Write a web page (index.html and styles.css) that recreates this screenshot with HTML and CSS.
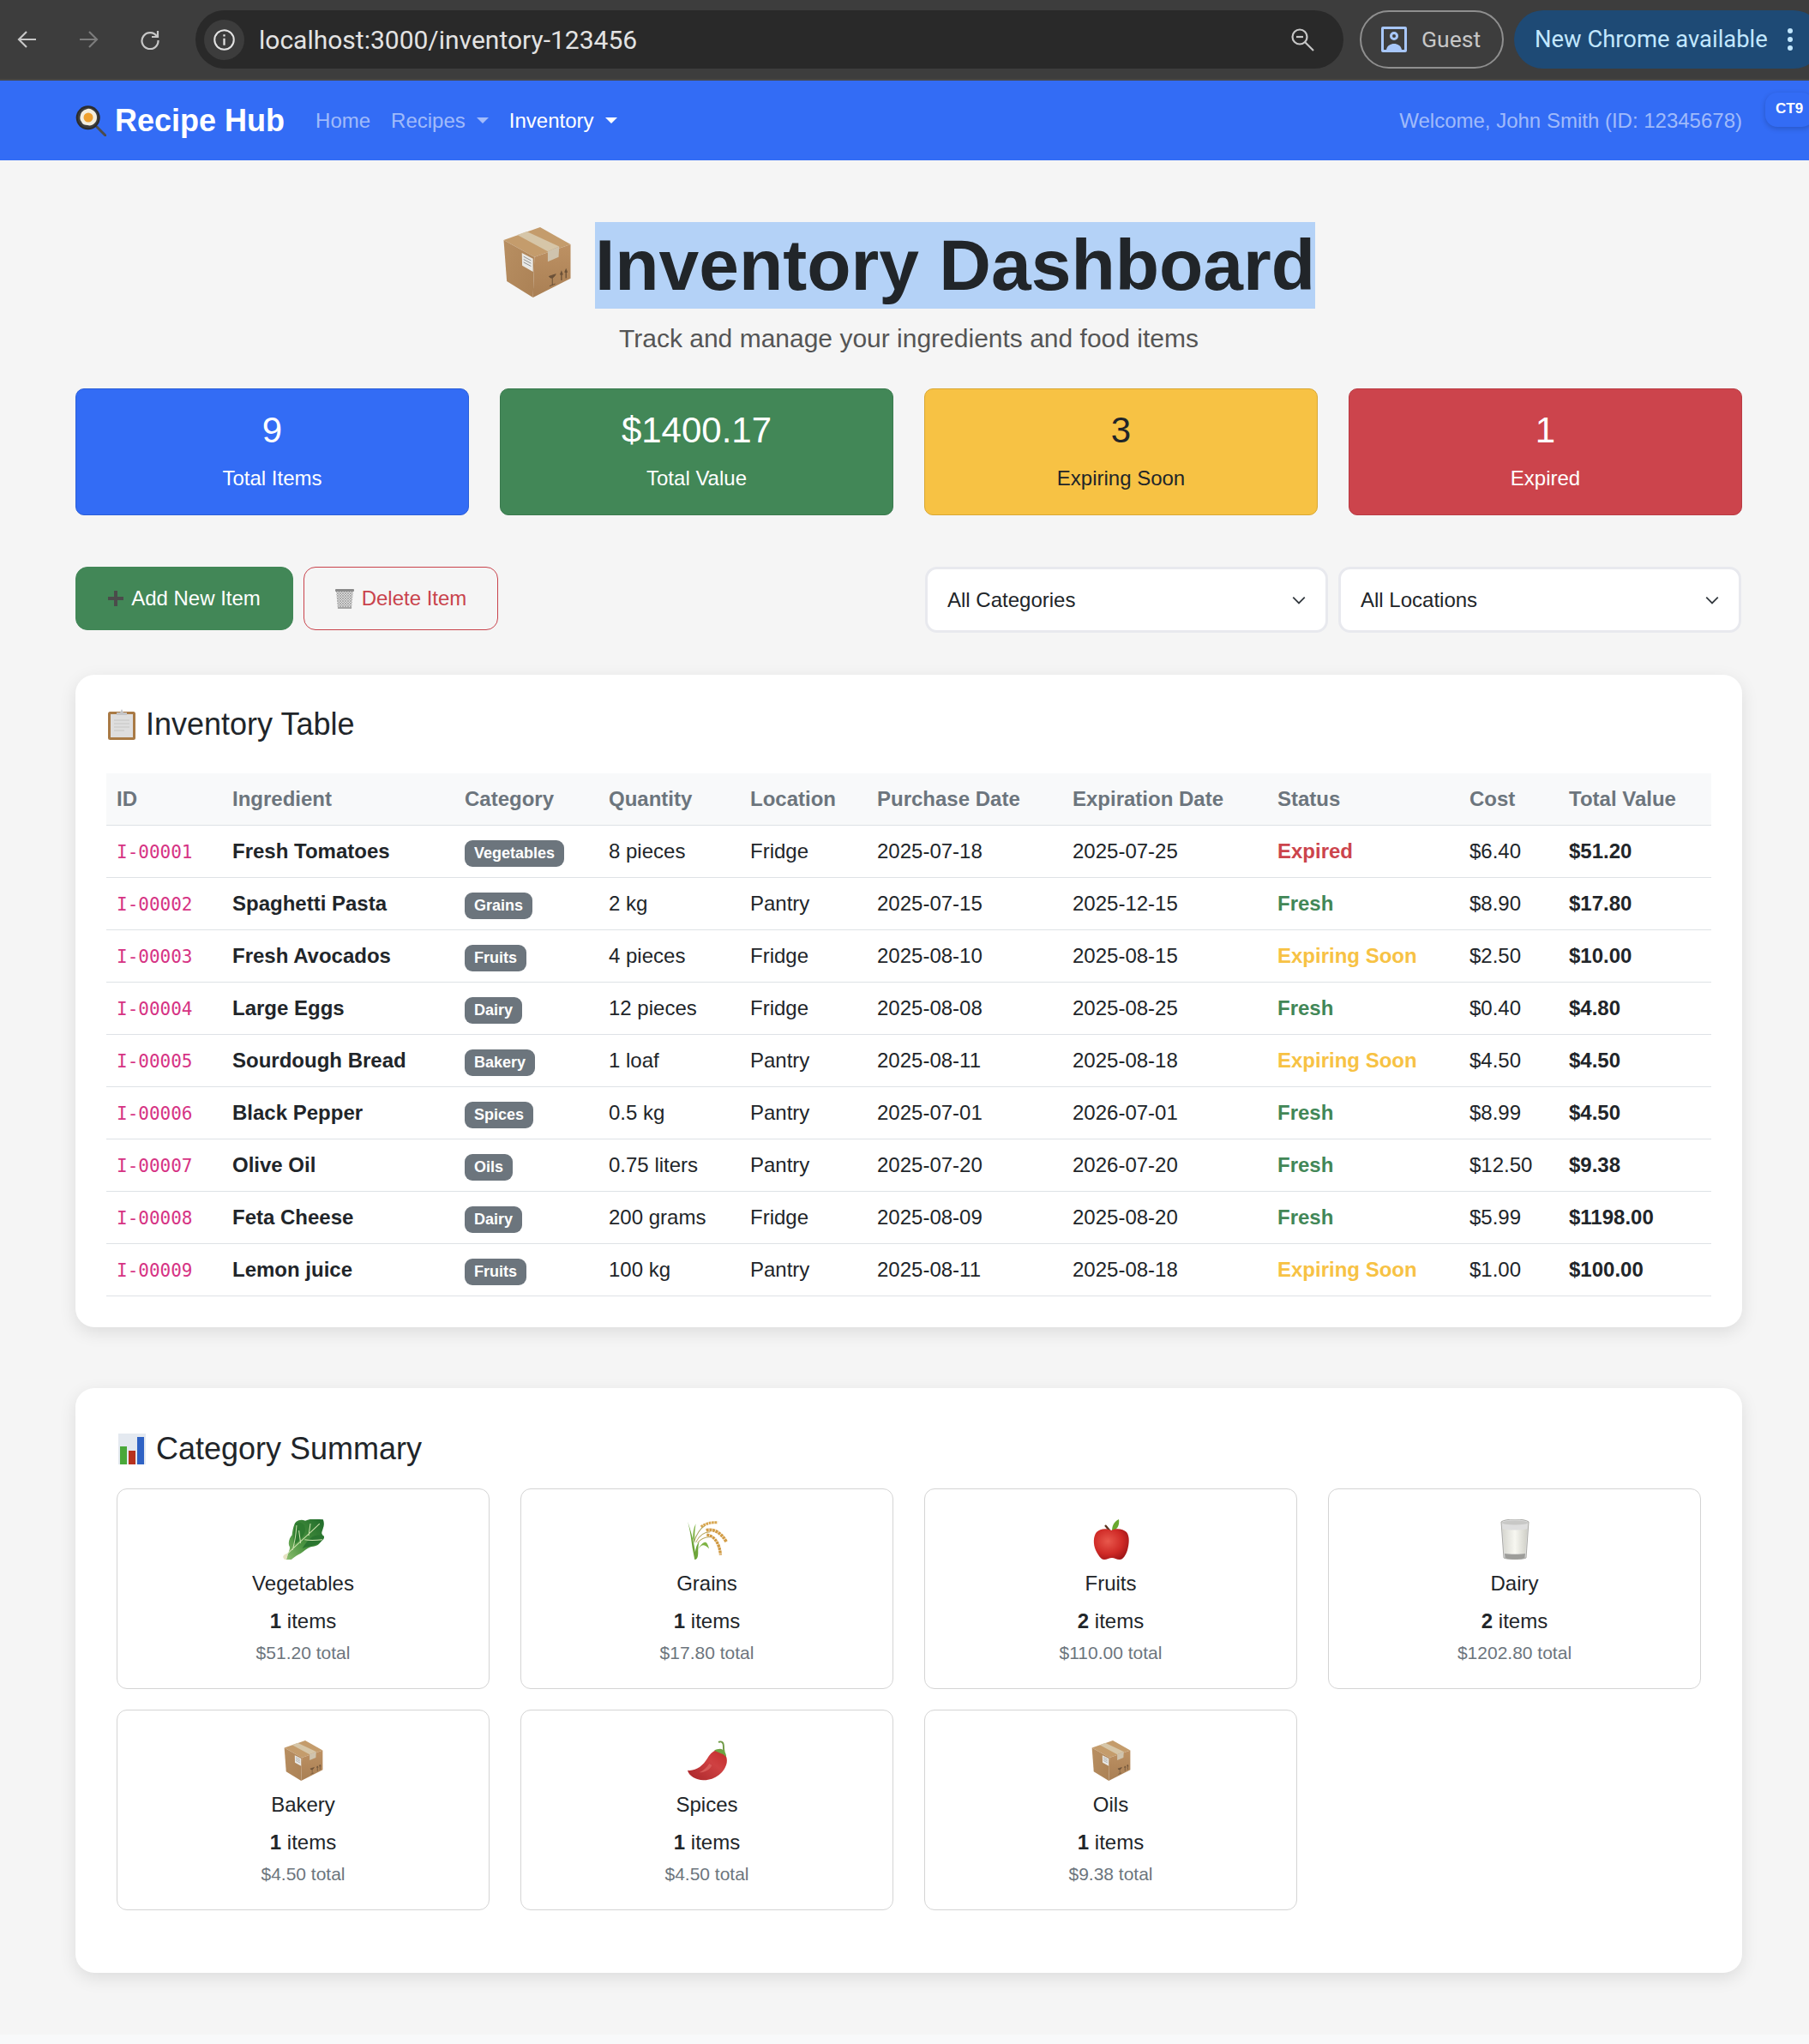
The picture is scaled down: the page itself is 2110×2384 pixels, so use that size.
FILE: index.html
```html
<!DOCTYPE html>
<html lang="en">
<head>
    <meta charset="UTF-8">
    <meta name="viewport" content="width=device-width, initial-scale=1.0">
    <title>Inventory Dashboard</title>
    <link rel="stylesheet" href="styles.css">
</head>

<body>
    <svg class="icon-defs" width="0" height="0" aria-hidden="true">
        <defs>
            <linearGradient id="boxLeft" x1="0" y1="0" x2="1" y2="1"><stop offset="0" stop-color="#b88f62"/><stop offset="1" stop-color="#ab8155"/></linearGradient>
            <linearGradient id="boxRight" x1="0" y1="0" x2="0" y2="1"><stop offset="0" stop-color="#bd9163"/><stop offset="1" stop-color="#a97f54"/></linearGradient>
            <linearGradient id="leafFill" x1="0" y1="1" x2="1" y2="0"><stop offset="0" stop-color="#8fbf72"/><stop offset="0.4" stop-color="#4b9440"/><stop offset="1" stop-color="#1f6a2a"/></linearGradient>
            <radialGradient id="appleFill" cx="0.4" cy="0.4" r="0.7"><stop offset="0" stop-color="#e8584c"/><stop offset="0.6" stop-color="#cf2a26"/><stop offset="1" stop-color="#9c1416"/></radialGradient>
            <linearGradient id="chiliFill" x1="0" y1="1" x2="1" y2="0"><stop offset="0" stop-color="#a8262a"/><stop offset="0.6" stop-color="#cf4142"/><stop offset="1" stop-color="#c22a2a"/></linearGradient>
            <linearGradient id="milkFill" x1="0" y1="0" x2="1" y2="0"><stop offset="0" stop-color="#d6d6cf"/><stop offset="0.5" stop-color="#f7f7f1"/><stop offset="1" stop-color="#cfcfc7"/></linearGradient>
            <pattern id="mesh" width="3" height="3" patternUnits="userSpaceOnUse"><rect width="3" height="3" fill="#dcdcdc"/><path d="M0 0L3 3M3 0L0 3" stroke="#8b8b8b" stroke-width="0.6"/></pattern>
            <symbol id="boxIcon" viewBox="27 25 235 247">
                <polygon points="155,25 262,85 135,130 27,70" fill="#c49c6c"/>
                <polygon points="27,70 135,130 130,272 38,215" fill="url(#boxLeft)"/>
                <polygon points="135,130 262,85 262,205 130,272" fill="url(#boxRight)"/>
                <polygon points="75,52 108,40 222,93 182,110" fill="#d6c6a8"/>
                <polygon points="182,110 222,93 220,130 182,146" fill="#cfc3ad"/>
                <polygon points="91,115 130,136 130,182 92,160" fill="#e9e9e6"/>
                <path d="M97 128l26 14M97 138l26 14M97 148l26 14" stroke="#8f8f8f" stroke-width="3"/>
                <path d="M186 198q12 14 24-8zM198 200v28M188 232l20-8" fill="#6b5138" stroke="#6b5138" stroke-width="3"/>
                <path d="M230 212v-28M226 192l4-10 4 10M246 204v-28M242 184l4-10 4 10" fill="none" stroke="#6b5138" stroke-width="4"/>
            </symbol>
        </defs>
    </svg>

    <div class="chrome-bar">
        <svg class="chrome-btn" viewBox="0 0 24 24"><path d="M22 12H3M11 3l-9 9 9 9" fill="none" stroke="#c7c7c7" stroke-width="2.2"/></svg>
        <svg class="chrome-btn dim" viewBox="0 0 24 24"><path d="M2 12h19M13 3l9 9-9 9" fill="none" stroke="#7c7c7c" stroke-width="2.2"/></svg>
        <svg class="chrome-btn" viewBox="0 0 24 24"><path d="M20 8.500A9.500 9.500 0 1 0 21.500 13M21 2v7h-7" fill="none" stroke="#c7c7c7" stroke-width="2.2"/></svg>
        <div class="omnibox">
            <span class="site-info">
                <svg viewBox="0 0 24 24" width="27" height="27"><circle cx="12" cy="12" r="10" fill="none" stroke="#e3e3e3" stroke-width="1.8"/><path d="M12 10.500v7M12 6.500v2" stroke="#e3e3e3" stroke-width="2"/></svg>
            </span>
            <span class="url">localhost:3000/inventory-123456</span>
            <svg class="zoom-icon" viewBox="0 0 28 28" width="28" height="28"><circle cx="11" cy="11" r="8.500" fill="none" stroke="#c7c7c7" stroke-width="2.2"/><path d="M7 11h8" stroke="#c7c7c7" stroke-width="2.2"/><path d="M17 17l10 10" stroke="#c7c7c7" stroke-width="2.2"/></svg>
        </div>
        <div class="guest-chip">
            <svg viewBox="0 0 32 32" width="32" height="32"><path fill="#a8c7fa" fill-rule="evenodd" d="M3 1h26a2 2 0 0 1 2 2v26a2 2 0 0 1-2 2H3a2 2 0 0 1-2-2V3a2 2 0 0 1 2-2zm1 3v24h3c1-5 5-7 9-7s8 2 9 7h3V4zm12 3a5 5 0 1 1 0 10 5 5 0 0 1 0-10zm0 3a2 2 0 1 0 0 4 2 2 0 0 0 0-4z"/></svg>
            <span>Guest</span>
        </div>
        <div class="update-chip">
            <span>New Chrome available</span>
            <svg viewBox="0 0 8 32" width="8" height="32"><circle cx="4" cy="6" r="3" fill="#c2e7ff"/><circle cx="4" cy="16" r="3" fill="#c2e7ff"/><circle cx="4" cy="26" r="3" fill="#c2e7ff"/></svg>
        </div>
    </div>

    <nav class="navbar">
        <a class="brand" href="#">
            <svg viewBox="0 0 36 36" width="36" height="36">
                <path d="M25 25l10 10" stroke="#4c4c4c" stroke-width="3" stroke-linecap="round"/>
                <circle cx="14.700" cy="14.300" r="14" fill="#2b2b2b"/>
                <circle cx="14.700" cy="14.300" r="12" fill="#3d3d3d"/>
                <path d="M14 4c3-1 5 1 7 2 3 2 4 5 4 8 0 3-1 5-3 7-2 2-5 3-8 2-3 0-6-1-7-4-2-2-2-5-1-8 1-4 4-6 8-7z" fill="#f3eee0"/>
                <circle cx="15" cy="14" r="5.500" fill="#eea02e"/>
            </svg>
            <span>Recipe Hub</span>
        </a>
        <a class="nav-link" href="#">Home</a>
        <a class="nav-link caret" href="#">Recipes</a>
        <a class="nav-link caret active" href="#">Inventory</a>
        <span class="welcome">Welcome, John Smith (ID: 12345678)</span>
    </nav>
    <div class="ct-badge">CT9</div>

    <main class="page">
        <header class="page-head">
            <h1 class="page-title">
                <svg class="title-icon"><use href="#boxIcon"/></svg>
                <span class="selected">Inventory Dashboard</span>
            </h1>
            <p class="subtitle">Track and manage your ingredients and food items</p>
        </header>

        <section class="stats">
            <div class="stat stat-blue"><div class="stat-num">9</div><div class="stat-label">Total Items</div></div>
            <div class="stat stat-green"><div class="stat-num">$1400.17</div><div class="stat-label">Total Value</div></div>
            <div class="stat stat-yellow"><div class="stat-num">3</div><div class="stat-label">Expiring Soon</div></div>
            <div class="stat stat-red"><div class="stat-num">1</div><div class="stat-label">Expired</div></div>
        </section>

        <section class="toolbar">
            <div class="actions">
                <button type="button" class="btn btn-add">
                    <svg viewBox="0 0 18 18" width="18" height="18"><path d="M9 0v18M0 9h18" stroke="#4b4b4b" stroke-width="4"/></svg>
                    Add New Item
                </button>
                <button type="button" class="btn btn-delete">
                    <svg viewBox="0 0 22 24" width="22" height="24"><polygon points="1,3 21,3 19,24 3,24" fill="url(#mesh)"/><rect x="0" y="1" width="22" height="3" rx="1" fill="#8a8a8a"/><rect x="3" y="22" width="16" height="2" fill="#a5a5a5"/></svg>
                    Delete Item
                </button>
            </div>
            <div class="filters">
                <select class="filter"><option>All Categories</option></select>
                <select class="filter"><option>All Locations</option></select>
            </div>
        </section>

        <section class="panel panel-table">
            <h2 class="panel-title">
                <svg viewBox="0 0 32 36" width="32" height="36"><rect x="0" y="3" width="32" height="33" rx="2.500" fill="#a97a45"/><rect x="3" y="6" width="26" height="27" fill="#dedede"/><path d="M7 13h18M7 17h18M7 21h18M7 25h12" stroke="#c6c6c3" stroke-width="1.2"/><path d="M10 7V4h4l2-4 2 4h4v3z" fill="#c4c4c6"/></svg>
                Inventory Table
            </h2>
            <table class="inv-table">
                <colgroup>
                    <col class="c-id"><col class="c-name"><col class="c-cat"><col class="c-qty"><col class="c-loc"><col class="c-buy"><col class="c-exp"><col class="c-status"><col class="c-cost"><col class="c-total">
                </colgroup>
                <thead>
                    <tr><th>ID</th><th>Ingredient</th><th>Category</th><th>Quantity</th><th>Location</th><th>Purchase Date</th><th>Expiration Date</th><th>Status</th><th>Cost</th><th>Total Value</th></tr>
                </thead>
                <tbody>
                    <tr><td><code>I-00001</code></td><td class="strong">Fresh Tomatoes</td><td><span class="badge">Vegetables</span></td><td>8 pieces</td><td>Fridge</td><td>2025-07-18</td><td>2025-07-25</td><td class="st-expired">Expired</td><td>$6.40</td><td class="strong">$51.20</td></tr>
                    <tr><td><code>I-00002</code></td><td class="strong">Spaghetti Pasta</td><td><span class="badge">Grains</span></td><td>2 kg</td><td>Pantry</td><td>2025-07-15</td><td>2025-12-15</td><td class="st-fresh">Fresh</td><td>$8.90</td><td class="strong">$17.80</td></tr>
                    <tr><td><code>I-00003</code></td><td class="strong">Fresh Avocados</td><td><span class="badge">Fruits</span></td><td>4 pieces</td><td>Fridge</td><td>2025-08-10</td><td>2025-08-15</td><td class="st-soon">Expiring Soon</td><td>$2.50</td><td class="strong">$10.00</td></tr>
                    <tr><td><code>I-00004</code></td><td class="strong">Large Eggs</td><td><span class="badge">Dairy</span></td><td>12 pieces</td><td>Fridge</td><td>2025-08-08</td><td>2025-08-25</td><td class="st-fresh">Fresh</td><td>$0.40</td><td class="strong">$4.80</td></tr>
                    <tr><td><code>I-00005</code></td><td class="strong">Sourdough Bread</td><td><span class="badge">Bakery</span></td><td>1 loaf</td><td>Pantry</td><td>2025-08-11</td><td>2025-08-18</td><td class="st-soon">Expiring Soon</td><td>$4.50</td><td class="strong">$4.50</td></tr>
                    <tr><td><code>I-00006</code></td><td class="strong">Black Pepper</td><td><span class="badge">Spices</span></td><td>0.5 kg</td><td>Pantry</td><td>2025-07-01</td><td>2026-07-01</td><td class="st-fresh">Fresh</td><td>$8.99</td><td class="strong">$4.50</td></tr>
                    <tr><td><code>I-00007</code></td><td class="strong">Olive Oil</td><td><span class="badge">Oils</span></td><td>0.75 liters</td><td>Pantry</td><td>2025-07-20</td><td>2026-07-20</td><td class="st-fresh">Fresh</td><td>$12.50</td><td class="strong">$9.38</td></tr>
                    <tr><td><code>I-00008</code></td><td class="strong">Feta Cheese</td><td><span class="badge">Dairy</span></td><td>200 grams</td><td>Fridge</td><td>2025-08-09</td><td>2025-08-20</td><td class="st-fresh">Fresh</td><td>$5.99</td><td class="strong">$1198.00</td></tr>
                    <tr><td><code>I-00009</code></td><td class="strong">Lemon juice</td><td><span class="badge">Fruits</span></td><td>100 kg</td><td>Pantry</td><td>2025-08-11</td><td>2025-08-18</td><td class="st-soon">Expiring Soon</td><td>$1.00</td><td class="strong">$100.00</td></tr>
                </tbody>
            </table>
        </section>

        <section class="panel panel-summary">
            <h2 class="panel-title">
                <svg viewBox="0 0 32 36" width="32" height="36"><rect width="32" height="36" fill="#e4e9f0"/><rect x="2" y="15" width="8" height="21" fill="#4aa83a"/><rect x="12" y="20" width="8" height="16" fill="#b8321f"/><rect x="22" y="4" width="8" height="32" fill="#2f62c4"/></svg>
                Category Summary
            </h2>
            <div class="cat-grid">
                <div class="cat-card">
                    <svg class="cat-icon" viewBox="29 29 142 140">
                        <path d="M40 170C44 150 54 135 52 125 44 112 52 92 60 84 62 68 66 46 74 38c10-8 22-8 32-4 12-4 24-8 36-6l26 2c4 10 4 20 0 30-2 8-6 14-4 20 6 8 8 14 2 20-8 10-14 20-26 22-8 2-16 2-26 8-10 6-20 16-32 22-12 6-24 18-32 22-6 2-8-2-10-4z" fill="url(#leafFill)"/>
                        <path d="M72 42c14-6 26 0 32 12 4 10 2 22-6 34-4 8-16 18-30 28-4-16-2-44 4-74z" fill="#2e7a30"/>
                        <path d="M130 90c10-6 24-8 40-4 4 6 0 12-4 16-10 10-24 18-40 20-10 2-20 4-30 8 10-16 20-30 34-40z" fill="#2a7530"/>
                        <path d="M34 160C60 130 110 90 156 44M62 136c8-28 12-56 14-86M90 112l-6-44M104 100c22 4 42 2 62 0M118 86c2-16 4-30 6-42" stroke="#cfe3b0" stroke-width="3" fill="none"/>
                        <path d="M30 156c6-6 10-8 14-6 2 4 0 10-4 20l-6-2c-4-4-6-8-4-12z" fill="#e7e3c3"/>
                    </svg>
                    <div class="cat-name">Vegetables</div>
                    <div class="cat-count"><b>1</b> items</div>
                    <div class="cat-total">$51.20 total</div>
                </div>
                <div class="cat-card">
                    <svg class="cat-icon" viewBox="36 30 140 140">
                        <path d="M38 38c8 30 12 60 16 90l8 42c8 0 12-8 12-24 0-14 0-26 4-38-10 10-12 24-14 36-4-34-14-70-26-106z" fill="#6ea53a"/>
                        <path d="M66 46c-8 14-10 30-10 50l6 20c0-26 0-50 4-70z" fill="#7fb345"/>
                        <path d="M74 134c8-14 18-26 26-24 6 2 10 14 12 22-8-8-14-12-20-12-6 0-12 6-18 14z" fill="#7fb345"/>
                        <path d="M60 108C68 82 78 64 100 50" stroke="#a9a765" stroke-width="3" fill="none"/>
                        <path d="M66 110c10-20 26-36 50-36M72 112c10-12 24-22 44-20" stroke="#b7a860" stroke-width="3" fill="none"/>
                        <path d="M84 56C100 46 120 38 142 42" stroke="#d8a64f" stroke-width="9" stroke-dasharray="8 2" fill="none"/>
                        <path d="M102 68c26-6 52 8 70 40" stroke="#d29c46" stroke-width="11" stroke-dasharray="9 2" fill="none"/>
                        <path d="M104 84c22 2 44 24 48 70" stroke="#cf9840" stroke-width="10" stroke-dasharray="9 2" fill="none"/>
                    </svg>
                    <div class="cat-name">Grains</div>
                    <div class="cat-count"><b>1</b> items</div>
                    <div class="cat-total">$17.80 total</div>
                </div>
                <div class="cat-card">
                    <svg class="cat-icon" viewBox="0 0 48 47">
                        <path d="M24 15C21 12 19 9 17 7" stroke="#5b3320" stroke-width="2.4" fill="none"/>
                        <path d="M25 14c0-6 2-11 8-14 1 6-1 12-8 14z" fill="#6aa82f"/>
                        <path d="M24 13c6-3 14-2 18 2 4 5 3 14 1 21-2 6-5 11-9 11-4 0-6-2-9-2s-6 2-9 2C12 47 9 42 6 36 3 29 3 20 7 15c4-4 11-5 17-2z" fill="url(#appleFill)"/>
                    </svg>
                    <div class="cat-name">Fruits</div>
                    <div class="cat-count"><b>2</b> items</div>
                    <div class="cat-total">$110.00 total</div>
                </div>
                <div class="cat-card">
                    <svg class="cat-icon" viewBox="0 0 48 47">
                        <path d="M8 3c4-4 28-4 32 0l-3 42c-3 2-23 2-26 0z" fill="#dedede" stroke="#a9a9a5" stroke-width="1"/>
                        <path d="M9.500 11c6 2 23 2 29 0l-2.500 29c-4 1-20 1-24 0z" fill="url(#milkFill)"/>
                        <ellipse cx="24" cy="4" rx="15" ry="2.600" fill="#c8c8c6"/>
                        <path d="M12 40c4 1 20 1 24 0l-.5 5c-3 2-20 2-23 0z" fill="#9d9d9a"/>
                    </svg>
                    <div class="cat-name">Dairy</div>
                    <div class="cat-count"><b>2</b> items</div>
                    <div class="cat-total">$1202.80 total</div>
                </div>
                <div class="cat-card">
                    <svg class="cat-icon"><use href="#boxIcon"/></svg>
                    <div class="cat-name">Bakery</div>
                    <div class="cat-count"><b>1</b> items</div>
                    <div class="cat-total">$4.50 total</div>
                </div>
                <div class="cat-card">
                    <svg class="cat-icon" viewBox="30 26 150 146">
                        <path d="M148 31c10-4 16 4 16 14 0 8 0 14 2 20" stroke="#6f9a45" stroke-width="6" fill="none" stroke-linecap="round"/>
                        <path d="M33 134C62 138 88 120 106 90 116 72 130 60 146 60 166 64 180 84 176 106 170 142 130 172 90 170 64 168 38 156 33 134z" fill="url(#chiliFill)"/>
                        <path d="M112 110c-8 14-22 26-36 32 20 0 38-10 46-26z" fill="#d85a58"/>
                        <path d="M130 62c10-6 24-8 30-4 8 4 14 14 14 28-6-6-10-10-16-12-8-4-18-8-28-12z" fill="#6ea343"/>
                    </svg>
                    <div class="cat-name">Spices</div>
                    <div class="cat-count"><b>1</b> items</div>
                    <div class="cat-total">$4.50 total</div>
                </div>
                <div class="cat-card">
                    <svg class="cat-icon"><use href="#boxIcon"/></svg>
                    <div class="cat-name">Oils</div>
                    <div class="cat-count"><b>1</b> items</div>
                    <div class="cat-total">$9.38 total</div>
                </div>
            </div>
        </section>
    </main>
    <footer class="page-foot"></footer>
</body>
</html>
```

FILE: styles.css
```css
* {
    box-sizing: border-box;
}
html {
    font-size: 24px;
}
body {
    margin: 0;
    background-color: #f5f5f5;
    color: #212529;
    font-family: "Liberation Sans", Arial, sans-serif;
    font-size: 24px;
    line-height: 1.5;
    position: relative;
}
.icon-defs {
    position: absolute;
}

/* browser strip */
.chrome-bar {
    display: flex;
    align-items: center;
    height: 94px;
    padding-left: 20px;
    background-color: #3d3d3d;
    border-bottom: 2px solid #474747;
    font-family: Roboto, sans-serif;
    overflow: hidden;
}
.chrome-btn {
    width: 24px;
    height: 24px;
    margin-right: 47px;
    flex-shrink: 0;
}
.chrome-btn:nth-of-type(3) {
    margin-left: 1px;
    margin-right: 41px;
}
.omnibox {
    display: flex;
    align-items: center;
    width: 1339px;
    height: 68px;
    padding: 0 34px 0 10px;
    border-radius: 34px;
    background-color: #292929;
    flex-shrink: 0;
}
.site-info {
    display: flex;
    align-items: center;
    justify-content: center;
    width: 47px;
    height: 47px;
    border-radius: 50%;
    background-color: #3c3c3c;
}
.url {
    margin-left: 17px;
    color: #e3e3e3;
    font-size: 30px;
}
.zoom-icon {
    margin-left: auto;
}
.guest-chip {
    display: flex;
    align-items: center;
    gap: 16px;
    width: 168px;
    height: 68px;
    margin-left: 19px;
    padding-left: 22px;
    border: 2px solid #8f8f8f;
    border-radius: 34px;
    color: #c7c7c7;
    font-size: 26.500px;
    flex-shrink: 0;
}
.update-chip {
    display: flex;
    align-items: center;
    gap: 22px;
    width: 360px;
    height: 68px;
    margin-left: 12px;
    padding-left: 24px;
    border-radius: 34px;
    background-color: #1e4a75;
    color: #c2e7ff;
    font-size: 27.400px;
    flex-shrink: 0;
}
.update-chip span {
    margin-top: 2px;
}

/* navbar */
.navbar {
    display: flex;
    align-items: center;
    height: 93px;
    padding: 0 78px 0 88px;
    background-color: #336cf5;
}
.brand {
    display: flex;
    align-items: center;
    gap: 10px;
    margin-right: 24px;
    color: #fff;
    font-size: 36px;
    font-weight: 700;
    text-decoration: none;
}
.nav-link {
    padding: 0 12px;
    color: rgba(255, 255, 255, 0.55);
    text-decoration: none;
}
.nav-link.active {
    color: #fff;
}
.caret::after {
    content: "";
    display: inline-block;
    margin-left: 13px;
    vertical-align: 5px;
    border-top: 7px solid;
    border-right: 7px solid transparent;
    border-left: 7px solid transparent;
}
.welcome {
    margin-left: auto;
    color: rgba(255, 255, 255, 0.55);
}
.ct-badge {
    position: absolute;
    top: 108px;
    right: -6px;
    width: 57px;
    height: 40px;
    padding-left: 12px;
    border-radius: 14px;
    background-color: #336cf5;
    box-shadow: 0 2px 6px rgba(0, 0, 0, 0.2);
    color: #fff;
    font-size: 17px;
    font-weight: 700;
    line-height: 38px;
}

/* page */
.page {
    padding: 72px 78px 0 88px;
}
.page-head {
    text-align: center;
}
.page-title {
    display: flex;
    align-items: center;
    justify-content: center;
    gap: 27px;
    margin: 0 0 12px;
    font-size: 84px;
    font-weight: 700;
    line-height: 101px;
}
.title-icon {
    width: 81px;
    height: 82px;
    margin-bottom: 8px;
}
.selected {
    background-color: #b4d2f7;
}
.subtitle {
    margin: 0 0 36px;
    color: #555;
    font-size: 30px;
    line-height: 45px;
}

.stats {
    display: grid;
    grid-template-columns: repeat(4, 1fr);
    gap: 36px;
    margin-bottom: 60px;
}
.stat {
    height: 148px;
    padding-top: 21px;
    border: 1px solid;
    border-radius: 10px;
    color: #fff;
    text-align: center;
}
.stat-num {
    font-size: 42px;
    line-height: 54px;
}
.stat-label {
    margin-top: 11px;
    line-height: 36px;
}
.stat-blue {
    background-color: #336cf5;
    border-color: #2a5ed8;
}
.stat-green {
    background-color: #428757;
    border-color: #3a7a4e;
}
.stat-yellow {
    background-color: #f7c244;
    border-color: #d9a733;
    color: #212529;
}
.stat-red {
    background-color: #cc444c;
    border-color: #b93b43;
}

.toolbar {
    display: flex;
    justify-content: space-between;
    align-items: flex-start;
    padding-right: 1px;
    margin-bottom: 49px;
}
.actions {
    display: flex;
    gap: 12px;
}
.btn {
    display: flex;
    align-items: center;
    justify-content: center;
    height: 74px;
    border: 1px solid;
    border-radius: 14px;
    font-family: inherit;
    font-size: 24px;
}
.btn-add {
    gap: 9px;
    width: 254px;
    background-color: #428757;
    border-color: #428757;
    color: #fff;
}
.btn-delete {
    gap: 9px;
    width: 227px;
    background-color: transparent;
    border-color: #c9434c;
    color: #c9434c;
}
.filters {
    display: flex;
    gap: 12px;
}
.filter {
    width: 470px;
    height: 77px;
    padding: 0 48px 0 23px;
    border: 3px solid #e8e9ee;
    border-radius: 14px;
    background: #fff url("data:image/svg+xml,%3csvg xmlns='http://www.w3.org/2000/svg' viewBox='0 0 16 16'%3e%3cpath fill='none' stroke='%23343a40' stroke-width='1.6' d='M2 5l6 6 6-6'/%3e%3c/svg%3e") no-repeat right 22px center / 18px 18px;
    color: #212529;
    font-family: inherit;
    font-size: 24px;
    appearance: none;
}

.panel {
    border-radius: 22px;
    background-color: #fff;
    box-shadow: 0 6px 20px rgba(0, 0, 0, 0.1);
}
.panel-table {
    padding: 35px 36px 36px;
    margin-bottom: 71px;
}
.panel-summary {
    padding: 48px 48px 73px;
}
.panel-title {
    display: flex;
    align-items: center;
    gap: 12px;
    margin: 0 0 34px;
    font-size: 36px;
    font-weight: 400;
    line-height: 46px;
}
.panel-table .panel-title {
    padding-left: 2px;
}
.panel-summary .panel-title {
    margin-bottom: 23px;
    gap: 12px;
    padding-left: 2px;
}

.inv-table {
    width: 1872px;
    table-layout: fixed;
    border-collapse: collapse;
}
.c-id { width: 135px; }
.c-name { width: 271px; }
.c-cat { width: 168px; }
.c-qty { width: 165px; }
.c-loc { width: 148px; }
.c-buy { width: 228px; }
.c-exp { width: 239px; }
.c-status { width: 224px; }
.c-cost { width: 116px; }
.c-total { width: 178px; }
.inv-table th {
    height: 60px;
    padding: 0 12px;
    border-bottom: 1px solid #dee2e6;
    background-color: #f8f9fa;
    color: #6c757d;
    font-weight: 700;
    text-align: left;
    white-space: nowrap;
}
.inv-table td {
    height: 61px;
    padding: 0 12px;
    border-bottom: 1px solid #dee2e6;
    white-space: nowrap;
}
code {
    color: #d63384;
    font-family: "DejaVu Sans Mono", monospace;
    font-size: 21px;
}
.strong {
    font-weight: 700;
}
.badge {
    display: inline-block;
    padding: 0 11px;
    border-radius: 9px;
    background-color: #6c757d;
    color: #fff;
    font-size: 18px;
    font-weight: 700;
    line-height: 31px;
    vertical-align: -1px;
}
.st-expired {
    color: #cc444c;
    font-weight: 700;
}
.st-fresh {
    color: #428757;
    font-weight: 700;
}
.st-soon {
    color: #f7c244;
    font-weight: 700;
}

.cat-grid {
    display: grid;
    grid-template-columns: repeat(4, 1fr);
    gap: 24px 36px;
}
.cat-card {
    height: 234px;
    padding-top: 35px;
    border: 1px solid #d4d4d4;
    border-radius: 12px;
    text-align: center;
}
.cat-icon {
    display: block;
    width: 48px;
    height: 47px;
    margin: 0 auto 10px;
}
.cat-name {
    line-height: 36px;
    margin-bottom: 8px;
}
.cat-count {
    line-height: 36px;
    margin-bottom: 3px;
}
.cat-total {
    color: #6c757d;
    font-size: 21px;
    line-height: 31px;
}
.page-foot {
    height: 11px;
    margin-top: 72px;
    background-color: #f8f9fa;
}
```
